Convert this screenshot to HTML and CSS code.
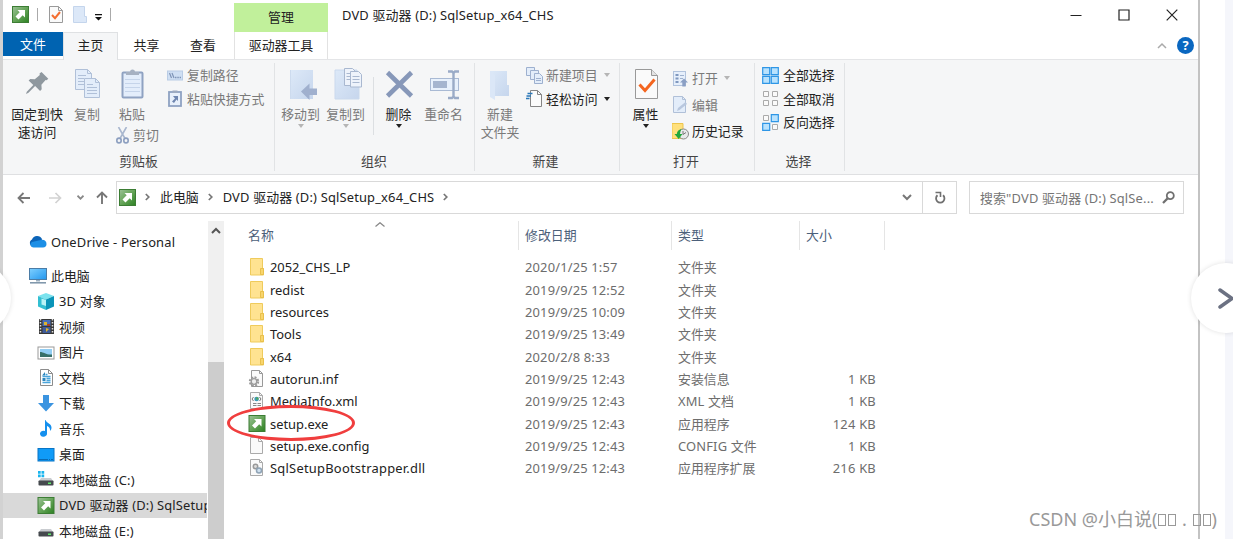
FILE: index.html
```html
<!DOCTYPE html>
<html lang="zh-CN">
<head>
  <meta charset="UTF-8">
  <meta name="viewport" content="width=device-width, initial-scale=1.0">
  <title>DVD 驱动器 (D:) SqlSetup_x64_CHS</title>
  <link rel="stylesheet" href="styles.css">
</head>
<body>
  <!-- Shared icons -->
  <svg class="defs" width="0" height="0">
    <defs>
      <linearGradient id="green" x1="0" y1="0" x2="1" y2="1">
        <stop offset="0" stop-color="#9cc297"/><stop offset=".5" stop-color="#65a458"/><stop offset="1" stop-color="#2c8122"/>
      </linearGradient>
      <linearGradient id="screen" x1="0" y1="0" x2="1" y2="1">
        <stop offset="0" stop-color="#7fd0ff"/><stop offset="1" stop-color="#2196ee"/>
      </linearGradient>
      <linearGradient id="pale" x1="0" y1="0" x2="1" y2="1">
        <stop offset="0" stop-color="#dde9f8"/><stop offset="1" stop-color="#c6d6ed"/>
      </linearGradient>
    </defs>
    <symbol id="i-setup" viewBox="0 0 17 17">
      <rect x=".5" y=".5" width="16" height="16" fill="url(#green)" stroke="#3c7d34"/>
      <path d="M5.500 4H13v7.500l-2.300-2.300-4.200 4.200-3-3 4.200-4.200z" fill="#fff"/>
    </symbol>
    <symbol id="i-folder" viewBox="0 0 14 18">
      <path d="M.5.500h12v10h1v6.500H.5z" fill="#ffe391" stroke="#efcb5c"/>
      <path d="M10.500 16.500v-6h3v6z" fill="#f8d56c" stroke="#e9c04c"/>
    </symbol>
    <symbol id="i-down" viewBox="0 0 6 4"><path d="M0 0h6L3 4z"/></symbol>
    <symbol id="i-drive" viewBox="0 0 17 16">
      <path d="M4 7h10l2 3H2z" fill="#c9ccd0"/><rect x="1.500" y="9.500" width="15" height="5" rx=".8" fill="#45494d"/>
      <rect x="11" y="11.500" width="3" height="1.500" fill="#5eea6a"/>
    </symbol>
  </svg>

  <div class="window">
    <!-- Title bar -->
    <div class="titlebar">
      <div class="quick-access">
        <svg width="17" height="17"><use href="#i-setup"/></svg>
        <span class="qa-line"></span>
        <svg class="qa-check" width="14" height="17" viewBox="0 0 14 17"><path d="M.5.5h9l4 4v12H.5z" fill="#fafafa" stroke="#9a9a9a"/><path d="M9.500.5v4h4" fill="none" stroke="#9a9a9a"/><path d="M3 9l3 3.200L11 6" fill="none" stroke="#f36d2f" stroke-width="2"/></svg>
        <svg class="qa-folder" width="14" height="17" viewBox="0 0 14 17"><path d="M.5.5h11v10h2v6H.5z" fill="#dce8f8" stroke="#c4d5ec"/></svg>
        <svg class="qa-more" width="7" height="7" viewBox="0 0 7 7"><path d="M0 0h7v1.300H0zM0 3h7L3.500 6.500z" fill="#111"/></svg>
        <span class="qa-line"></span>
      </div>
      <div class="context-tab">管理</div>
      <div class="window-title latin">DVD 驱动器 (D:) SqlSetup_x64_CHS</div>
      <div class="window-buttons">
        <svg width="12" height="12" viewBox="0 0 12 12"><path d="M.500 6.500h11" stroke="#222"/></svg>
        <svg width="12" height="12" viewBox="0 0 12 12"><path d="M1 1h10v10H1z" fill="none" stroke="#222" stroke-width="1.200"/></svg>
        <svg width="12" height="12" viewBox="0 0 12 12"><path d="M.7.700l10.600 10.600M11.300.7.700 11.300" stroke="#222" stroke-width="1.200"/></svg>
      </div>
    </div>

    <!-- Ribbon tabs -->
    <div class="tabs">
      <div class="tab tab-file">文件</div>
      <div class="tab tab-active">主页</div>
      <div class="tab tab-share">共享</div>
      <div class="tab tab-view">查看</div>
      <div class="tab tab-drive">驱动器工具</div>
      <div class="tabs-right">
        <svg width="10" height="7" viewBox="0 0 10 7"><path d="M1 6l4-4 4 4" fill="none" stroke="#aaa" stroke-width="1.500"/></svg>
        <span class="help">?</span>
      </div>
    </div>

    <!-- Ribbon -->
    <div class="ribbon">
      <div class="group group-clipboard">
        <div class="group-body">
          <div class="big-btn w-pin">
            <svg width="32" height="32" viewBox="0 0 32 32"><g transform="translate(5 4)"><path d="M15.500 0l6.800 6.800-1.700 1.500-1-.3-4.200 4.800.3 4.500-1.600 1.600-5-4.900-6.600 6.700L0 22l.8-2.200L7.300 13 2.600 8.500l1.700-1.600 4.500.3 5-4.300-.3-1.500z" fill="#8f989f"/></g></svg>
            <span>固定到快<br>速访问</span>
          </div>
          <div class="big-btn w-copy off">
            <svg width="32" height="32" viewBox="0 0 32 32"><g transform="translate(1 0)" fill="#e3edfa" stroke="#b0c0d8"><path d="M3.500 1.500h12l4 4v16h-16z"/><path d="M15.500 1.500v4h4M6 7.500h8M6 10.500h6M6 13.500h6M6 16.500h6" fill="none"/><path d="M12.500 10.500h11l4 4v15h-15z"/><path d="M23.500 10.500v4h4M15 16.500h6M15 19.500h10M15 22.500h10M15 25.500h10" fill="none"/></g></svg>
            <span>复制</span>
          </div>
          <div class="stack w-paste off">
            <div class="big-btn">
              <svg width="32" height="32" viewBox="0 0 32 32"><rect x="6.500" y="4.500" width="20" height="25" rx="1" fill="#e3edfb" stroke="#8fa2c2" stroke-width="2"/><path d="M9 11.500h15M9 15.500h15M9 19.500h15M9 23.500h15" stroke="#c5d4ea"/><path d="M10 7V4h4a2.500 2.500 0 0 1 5 0h4v3z" fill="#a6b1c2"/></svg>
              <span>粘贴</span>
            </div>
            <div class="small-btn cut">
              <svg width="13" height="17" viewBox="0 0 13 17"><path d="M2.500 0l6.500 11.500M10.500 0L4 11.500" stroke="#a9b7ce" stroke-width="1.600"/><ellipse cx="3" cy="13.500" rx="2.200" ry="2.400" fill="none" stroke="#8c9fc0" stroke-width="1.600"/><ellipse cx="10" cy="13.500" rx="2.200" ry="2.400" fill="none" stroke="#8c9fc0" stroke-width="1.600"/></svg>
              <span>剪切</span>
            </div>
          </div>
          <div class="small-list off">
            <div class="small-btn">
              <svg width="16" height="17" viewBox="0 0 16 17"><rect x=".5" y="4" width="15" height="9" fill="#cfdff3" stroke="#b9cce5"/><path d="M2.500 6l2 5M5 6l2 5" stroke="#7f94b7" stroke-width="1.200"/><path d="M8 10.500h6" stroke="#7f94b7" stroke-width="1.300" stroke-dasharray="1.500 .8"/></svg>
              <span>复制路径</span>
            </div>
            <div class="small-btn">
              <svg width="16" height="17" viewBox="0 0 16 17"><rect x="2" y="2" width="12" height="14" fill="#e8f0fb" stroke="#8fa2c2" stroke-width="1.800"/><path d="M5.500.5h5V3h-5z" fill="#9eabc0"/><path d="M6 6h5v5L9.500 9.500 7 13 5 11.500l3-3z" fill="#6f86b0"/></svg>
              <span>粘贴快捷方式</span>
            </div>
          </div>
        </div>
        <div class="group-name">剪贴板</div>
      </div>

      <div class="group group-organize">
        <div class="group-body">
          <div class="big-btn w45 off">
            <svg width="32" height="32" viewBox="0 0 32 32"><path d="M5 2h23v29H5z" fill="url(#pale)"/><path d="M5.500 2v29" stroke="#cddbee"/><path d="M16 23.500L24.500 15.500v5H32v6.500h-7.500v5z" fill="#a0b0ce"/></svg>
            <span>移动到</span>
            <svg class="drop" width="6" height="4"><use href="#i-down"/></svg>
          </div>
          <div class="big-btn w45 off">
            <svg width="32" height="32" viewBox="0 0 32 32"><path d="M5 2h22v16h2v13H5z" fill="url(#pale)" stroke="#cad9ed"/><g fill="#eef3fb" stroke="#a9b8d0"><path d="M14.500.5h8l3 3v14h-11z"/><path d="M16.500 5.500h5M16.500 8.500h5M16.500 11.500h5"/><path d="M20.500 3.500h8l3 3v12.500h-11z"/><path d="M22.500 8.500h7M22.500 11.500h7M22.500 14.500h7"/></g></svg>
            <span>复制到</span>
            <svg class="drop" width="6" height="4"><use href="#i-down"/></svg>
          </div>
          <div class="body-line"></div>
          <div class="big-btn w-delete">
            <svg width="32" height="32" viewBox="0 0 32 32"><path d="M4.500 4.500l24 23.500M28.500 4.500L4.500 28" stroke="#8798b9" stroke-width="4.600"/></svg>
            <span>删除</span>
            <svg class="drop" width="6" height="4"><use href="#i-down"/></svg>
          </div>
          <div class="big-btn w-rename off">
            <svg width="32" height="32" viewBox="0 0 32 32"><rect x="2.500" y="10.500" width="28" height="12" fill="#e8f1fc" stroke="#a9bad4"/><rect x="5" y="13" width="14" height="7" fill="#a5b5cf"/><path d="M20 3.500h4l1.500 1.500L27 3.500h4M20 30h4l1.500-1.500L27 30h4M25.500 4v25" fill="none" stroke="#9aabc7" stroke-width="2.400"/></svg>
            <span>重命名</span>
          </div>
        </div>
        <div class="group-name">组织</div>
      </div>

      <div class="group group-new">
        <div class="group-body">
          <div class="big-btn w-new off">
            <svg width="32" height="32" viewBox="0 0 32 32"><path d="M6 3h17v14h2v11H6z" fill="url(#pale)"/><path d="M6 3l5 4v25l-5-3z" fill="#dbe7f7"/></svg>
            <span>新建<br>文件夹</span>
          </div>
          <div class="small-list">
            <div class="small-btn off">
              <svg width="17" height="17" viewBox="0 0 17 17"><g fill="#e3edfa" stroke="#9db0cf"><path d="M.5.500h8v8h-8z"/><path d="M4.500 3.500h8v9h-8z"/><path d="M8.500 6.500h5l3 3v7h-8z"/><path d="M10 11.500h5M10 13.500h5"/></g></svg>
              <span>新建项目</span>
              <svg class="side-drop" width="6" height="4"><use href="#i-down"/></svg>
            </div>
            <div class="small-btn">
              <svg width="17" height="17" viewBox="0 0 17 17"><path d="M4.500.5h7l4 4v12h-11z" fill="#fbfbfb" stroke="#858585"/><path d="M11.500.5v4h4" fill="none" stroke="#858585"/><path d="M1.500 3.500h5M.500 6h4.500M0 8.500h3.500" stroke="#2b78b9" stroke-width="1.500"/></svg>
              <span>轻松访问</span>
              <svg class="side-drop" width="6" height="4"><use href="#i-down"/></svg>
            </div>
          </div>
        </div>
        <div class="group-name">新建</div>
      </div>

      <div class="group group-open">
        <div class="group-body">
          <div class="big-btn w-prop">
            <svg width="32" height="32" viewBox="0 0 32 32"><path d="M5.500 1.500h16l6 6v23h-22z" fill="#fafafa" stroke="#999"/><path d="M21.500 1.500v6h6" fill="#e3e3e3" stroke="#999"/><path d="M9.500 16.500l5.500 6 9.500-11" fill="none" stroke="#f4651f" stroke-width="3"/></svg>
            <span>属性</span>
            <svg class="drop" width="6" height="4"><use href="#i-down"/></svg>
          </div>
          <div class="small-list loose">
            <div class="small-btn off">
              <svg width="17" height="17" viewBox="0 0 17 17"><rect x="1.500" y="1.500" width="12" height="14" fill="#e6effb" stroke="#b1c3dd"/><path d="M3.500 4h3v2h-3zM3.500 7.500h3v2h-3zM3.500 11h3v2h-3z" fill="#7f98bf"/><path d="M8 5.500h4M8 8.500h3" stroke="#9fb2cf"/><path d="M12 8.500l4 4h-2.300v4h-3.400v-4H8z" fill="#8a9fc4"/></svg>
              <span>打开</span>
              <svg class="side-drop" width="6" height="4"><use href="#i-down"/></svg>
            </div>
            <div class="small-btn off">
              <svg width="17" height="17" viewBox="0 0 17 17"><path d="M1.500.5h9l3 3v13h-12z" fill="#e3edfa" stroke="#b0c0d8"/><path d="M10.500.5v3h3" fill="none" stroke="#b0c0d8"/><path d="M5 15l1-3 7.500-6 1.500 2-7.500 6z" fill="#b8c7de"/></svg>
              <span>编辑</span>
            </div>
            <div class="small-btn">
              <svg width="17" height="17" viewBox="0 0 17 17"><path d="M0 .500h11v15H0z" fill="#ffe07c" stroke="#edc54c"/><circle cx="11.500" cy="11" r="5" fill="#e7e9eb" stroke="#888"/><path d="M11 8v3.500l3-2" fill="none" stroke="#777"/><path d="M9.500 6c-3 .5-4.500 2.500-4.700 5H2.500l4.200 5 3.800-5H8c.1-1.800.6-3.500 1.500-5z" fill="#22a83c"/></svg>
              <span>历史记录</span>
            </div>
          </div>
        </div>
        <div class="group-name">打开</div>
      </div>

      <div class="group group-select">
        <div class="group-body">
          <div class="small-list">
            <div class="small-btn">
              <svg width="17" height="17" viewBox="0 0 17 17"><path d="M.7.700h7v7h-7zM9.300.7h7v7h-7zM.7 9.300h7v7h-7zM9.300 9.300h7v7h-7z" fill="#b9e2fd" stroke="#2e96e6" stroke-width="1.200"/></svg>
              <span>全部选择</span>
            </div>
            <div class="small-btn">
              <svg width="17" height="17" viewBox="0 0 17 17"><path d="M1.500 1.500h5v5h-5zM10.500 1.500h5v5h-5zM1.500 10.500h5v5h-5zM10.500 10.500h5v5h-5z" fill="#fafafa" stroke="#aaa"/></svg>
              <span>全部取消</span>
            </div>
            <div class="small-btn">
              <svg width="17" height="17" viewBox="0 0 17 17"><path d="M1.500 1.500h5v5h-5zM10.500 10.500h5v5h-5z" fill="#fafafa" stroke="#aaa"/><path d="M9.300.7h7v7h-7zM.7 9.300h7v7h-7z" fill="#b9e2fd" stroke="#2e96e6" stroke-width="1.200"/></svg>
              <span>反向选择</span>
            </div>
          </div>
        </div>
        <div class="group-name">选择</div>
      </div>
    </div>

    <!-- Address bar -->
    <div class="address-row">
      <div class="nav-buttons">
        <svg width="14" height="12" viewBox="0 0 14 12"><path d="M13 6H1.500M6.500 1L1.500 6l5 5" fill="none" stroke="#777" stroke-width="1.800"/></svg>
        <svg class="nav-forward" width="14" height="12" viewBox="0 0 14 12"><path d="M1 6h11.500M7.500 1l5 5-5 5" fill="none" stroke="#d2d2d2" stroke-width="1.700"/></svg>
        <svg class="nav-recent" width="7" height="5" viewBox="0 0 7 5"><path d="M.5.700l3 3 3-3" fill="none" stroke="#888" stroke-width="1.700"/></svg>
        <svg class="nav-up" width="12" height="14" viewBox="0 0 12 14"><path d="M6 13V1.500M1 6.500l5-5 5 5" fill="none" stroke="#777" stroke-width="1.900"/></svg>
      </div>
      <div class="address-box">
        <svg width="17" height="17"><use href="#i-setup"/></svg>
        <svg class="crumb-sep" width="5" height="8" viewBox="0 0 5 8"><path d="M.8 1l3 3-3 3" fill="none" stroke="#777" stroke-width="1.700"/></svg>
        <span>此电脑</span>
        <svg class="crumb-sep" width="5" height="8" viewBox="0 0 5 8"><path d="M.8 1l3 3-3 3" fill="none" stroke="#777" stroke-width="1.700"/></svg>
        <span class="latin">DVD 驱动器 (D:) SqlSetup_x64_CHS</span>
        <svg class="crumb-sep" width="5" height="8" viewBox="0 0 5 8"><path d="M.8 1l3 3-3 3" fill="none" stroke="#777" stroke-width="1.700"/></svg>
        <svg class="address-drop" width="10" height="7" viewBox="0 0 10 7"><path d="M1 1l4 4 4-4" fill="none" stroke="#777" stroke-width="2"/></svg>
        <div class="refresh">
          <svg width="12" height="13" viewBox="0 0 12 13"><path d="M3.500 4.200a4.200 4.200 0 1 0 5.500 0" fill="none" stroke="#707070" stroke-width="1.800"/><path d="M1.500 1.500h5v4.500" fill="none" stroke="#707070" stroke-width="1.600"/></svg>
        </div>
      </div>
      <div class="search-box">
        <span class="latin">搜索"DVD 驱动器 (D:) SqlSe...</span>
        <svg width="13" height="13" viewBox="0 0 13 13"><circle cx="8.300" cy="4.700" r="3.500" fill="none" stroke="#707070" stroke-width="1.800"/><path d="M5.600 7.400L1 12" stroke="#707070" stroke-width="2.200"/></svg>
      </div>
    </div>

    <div class="main">
      <!-- Navigation pane -->
      <div class="nav-pane">
        <div class="nav-item top onedrive">
          <svg width="18" height="16" viewBox="0 0 18 16"><path d="M4.500 13A4 4 0 0 1 3 5.500 5.500 5.500 0 0 1 13 5l-2 8z" fill="#0b64b8"/><path d="M5 13.500a3 3 0 0 1-3.500-3c0-1.500 1-2.500 2.500-2.800l8-1.700a4 4 0 0 1 5.500 4c0 2-1.200 3.500-3.500 3.500z" fill="#1c8fe6"/></svg>
          <span class="latin">OneDrive - Personal</span>
        </div>
        <div class="nav-item top">
          <svg width="18" height="16" viewBox="0 0 18 16"><rect x=".5" y=".5" width="17" height="11" fill="url(#screen)" stroke="#4b7ca6"/><path d="M7 12h4v1.500H7z" fill="#9db0c0"/><path d="M1 14.800h16" stroke="#7b93a8" stroke-width="1.500"/></svg>
          <span>此电脑</span>
        </div>
        <div class="nav-item">
          <svg width="18" height="17" viewBox="0 0 18 17"><path d="M9 0l8 3-8 3.500L1 3z" fill="#7be3ee"/><path d="M1 3l8 3.500V17l-8-3.500z" fill="#32bfd2"/><path d="M17 3L9 6.500V17l8-3.500z" fill="#0a94b8"/><path d="M4.500 5.500L9 7v6l-4.500-1.500z" fill="#b8f3f6"/></svg>
          <span class="latin">3D 对象</span>
        </div>
        <div class="nav-item">
          <svg width="18" height="17" viewBox="0 0 18 17"><rect x="2" y="1" width="15" height="15" fill="#383838"/><path d="M3.500 1v15M15.500 1v15" stroke="#ddd" stroke-width="1.500" stroke-dasharray="1.500 1.500"/><path d="M5.500 2h8v6h-8z" fill="#476eb8"/><path d="M5.500 9h8v6h-8z" fill="#3f5b99"/><path d="M7 4h3v3H7zM9 10l3 1-3 3z" fill="#ddb32e"/><path d="M10 6h3v2h-3z" fill="#a3412d"/></svg>
          <span>视频</span>
        </div>
        <div class="nav-item">
          <svg width="18" height="17" viewBox="0 0 18 17"><rect x="1" y="3" width="16" height="12" fill="#fff" stroke="#999"/><path d="M3 5h12v8H3z" fill="#92cdf3"/><path d="M3 8c4 0 6 3 12 2.500V13H3z" fill="#386f68"/></svg>
          <span>图片</span>
        </div>
        <div class="nav-item">
          <svg width="18" height="17" viewBox="0 0 18 17"><path d="M3.500.5h8l4 4v12h-12z" fill="#fff" stroke="#8c8c8c"/><path d="M11.500.5v4h4" fill="none" stroke="#8c8c8c"/><path d="M8.500 5.500h2M5.500 7.500h8M9.500 9.500h4M9.500 11.500h4M5.500 13.500h8" stroke="#4aa5dc" stroke-width="1.300"/><path d="M5.500 9h3v3h-3zM5 6.500L8 3v3.500z" fill="#2d86bd"/></svg>
          <span>文档</span>
        </div>
        <div class="nav-item">
          <svg width="18" height="17" viewBox="0 0 18 17"><path d="M6 0h6v8h5l-8 8.500L1 8h5z" fill="#3b94e0"/></svg>
          <span>下载</span>
        </div>
        <div class="nav-item">
          <svg width="18" height="17" viewBox="0 0 18 17"><path d="M8.500 0c1 3 6 3.500 6 7.500 0 1.500-.5 2.500-1.500 3.500.5-3-1.500-4.500-3-5v7.500a3.500 3 0 1 1-2-2.500V0z" fill="#1590ee"/></svg>
          <span>音乐</span>
        </div>
        <div class="nav-item">
          <svg width="18" height="17" viewBox="0 0 18 17"><rect x="1" y="2.500" width="16" height="12.500" fill="#109bf7" stroke="#0875c6"/><path d="M2 13.500h14" stroke="#096bb4" stroke-dasharray="9 1 1 1"/></svg>
          <span>桌面</span>
        </div>
        <div class="nav-item">
          <svg width="18" height="17" viewBox="0 0 18 17"><use href="#i-drive" width="17" height="16"/><path d="M1 0h2.700v2.700H1zM4.500 0h2.700v2.700H4.500zM1 3.500h2.700v2.700H1zM4.500 3.500h2.700v2.700H4.500z" fill="#19b5ee"/></svg>
          <span class="latin">本地磁盘 (C:)</span>
        </div>
        <div class="nav-item selected">
          <svg width="18" height="17"><use href="#i-setup"/></svg>
          <span class="latin">DVD 驱动器 (D:) SqlSetup_x64_CHS</span>
        </div>
        <div class="nav-item">
          <svg width="18" height="17" viewBox="0 0 18 17"><use href="#i-drive" width="17" height="16"/></svg>
          <span class="latin">本地磁盘 (E:)</span>
        </div>
      </div>
      <div class="scrollbar">
        <svg width="10" height="7" viewBox="0 0 10 7"><path d="M1 6l4-4 4 4" fill="none" stroke="#555" stroke-width="2"/></svg>
        <div class="thumb"></div>
      </div>

      <!-- File list -->
      <div class="files">
        <div class="file-row file-head">
          <div class="col-name">名称<svg class="sort" width="10" height="5" viewBox="0 0 10 5"><path d="M.500 4.500L5 .7l4.500 3.800" fill="none" stroke="#888" stroke-width="1.200"/></svg></div>
          <div>修改日期</div>
          <div>类型</div>
          <div>大小</div>
        </div>
        <div class="file-row">
          <div class="file-name"><svg width="18" height="18"><use href="#i-folder"/></svg>2052_CHS_LP</div>
          <div class="date">2020/1/25 1:57</div><div>文件夹</div><div></div>
        </div>
        <div class="file-row">
          <div class="file-name"><svg width="18" height="18"><use href="#i-folder"/></svg>redist</div>
          <div class="date">2019/9/25 12:52</div><div>文件夹</div><div></div>
        </div>
        <div class="file-row">
          <div class="file-name"><svg width="18" height="18"><use href="#i-folder"/></svg>resources</div>
          <div class="date">2019/9/25 10:09</div><div>文件夹</div><div></div>
        </div>
        <div class="file-row">
          <div class="file-name"><svg width="18" height="18"><use href="#i-folder"/></svg>Tools</div>
          <div class="date">2019/9/25 13:49</div><div>文件夹</div><div></div>
        </div>
        <div class="file-row">
          <div class="file-name"><svg width="18" height="18"><use href="#i-folder"/></svg>x64</div>
          <div class="date">2020/2/8 8:33</div><div>文件夹</div><div></div>
        </div>
        <div class="file-row">
          <div class="file-name"><svg width="18" height="18" viewBox="0 0 18 18"><path d="M3.500.5h8l3 3v13h-11z" fill="#fafafa" stroke="#999"/><path d="M11.500.5v3h3" fill="none" stroke="#999"/><circle cx="6" cy="11.500" r="4.200" fill="none" stroke="#999" stroke-width="2" stroke-dasharray="2 1.300"/><circle cx="6" cy="11.500" r="2.800" fill="#eee" stroke="#999" stroke-width="1.300"/></svg>autorun.inf</div>
          <div class="date">2019/9/25 12:43</div><div>安装信息</div><div>1 KB</div>
        </div>
        <div class="file-row">
          <div class="file-name"><svg width="18" height="18" viewBox="0 0 18 18"><path d="M2.500.5h9l3 3v13h-12z" fill="#fafafa" stroke="#aaa"/><path d="M11.500.5v3h3" fill="none" stroke="#aaa"/><circle cx="8.600" cy="7" r="2.300" fill="#3a9ab5"/><path d="M8.300 5.500h2v2h-2z" fill="#59a84b"/><path d="M5.500 5L4 7l1.500 2M11.500 5L13 7l-1.500 2" fill="none" stroke="#777"/><path d="M5 11.500h8M5 13.500h8" stroke="#888" stroke-dasharray="3.500 1"/></svg>MediaInfo.xml</div>
          <div class="date">2019/9/25 12:43</div><div class="date">XML 文档</div><div>1 KB</div>
        </div>
        <div class="file-row">
          <div class="file-name"><svg width="18" height="17"><use href="#i-setup"/></svg>setup.exe</div>
          <div class="date">2019/9/25 12:43</div><div>应用程序</div><div>124 KB</div>
        </div>
        <div class="file-row">
          <div class="file-name"><svg width="18" height="18" viewBox="0 0 18 18"><path d="M2.500.5h8l4 4v12h-12z" fill="#fafafa" stroke="#aaa"/><path d="M10.500.5v4h4" fill="none" stroke="#aaa"/></svg>setup.exe.config</div>
          <div class="date">2019/9/25 12:43</div><div class="date">CONFIG 文件</div><div>1 KB</div>
        </div>
        <div class="file-row">
          <div class="file-name"><svg width="18" height="18" viewBox="0 0 18 18"><path d="M2.500.5h9l3 3v13h-12z" fill="#fafafa" stroke="#aaa"/><path d="M11.500.5v3h3" fill="none" stroke="#aaa"/><circle cx="7.500" cy="7.500" r="2.200" fill="#ddd" stroke="#999" stroke-width="1.500"/><circle cx="11" cy="11.500" r="2.500" fill="#cfe0ee" stroke="#8fa3b5" stroke-width="1.500"/></svg><span class="wide">SqlSetupBootstrapper.dll</span></div>
          <div class="date">2019/9/25 12:43</div><div>应用程序扩展</div><div>216 KB</div>
        </div>
        <div class="marker"></div>
      </div>
    </div>
  </div>

  <!-- Page edge and carousel buttons -->
  <div class="page-edge"></div>
  <div class="slide-btn slide-prev"></div>
  <div class="slide-btn slide-next">
    <svg width="18" height="22" viewBox="0 0 18 22"><path d="M3 3l12 8.500L3 20" fill="none" stroke="#6b7182" stroke-width="3.500" stroke-linecap="round" stroke-linejoin="round"/></svg>
  </div>
  <div class="watermark">CSDN @小白说(<span class="box"></span><span class="box"></span> . <span class="box"></span><span class="box"></span>)</div>
</body>
</html>
```

FILE: styles.css
```css
* {
  box-sizing: border-box;
}
body {
  margin: 0;
  height: 539px;
  overflow: hidden;
  position: relative;
  display: flex;
  background: #fff;
  font-family: "Noto Sans", "Noto Sans CJK SC", sans-serif;
  font-size: 12.9px;
  line-height: 18px;
  color: #222;
  white-space: nowrap;
}
svg {
  display: block;
  flex: none;
}
.defs {
  position: absolute;
}
.latin {
  letter-spacing: 0.17px;
}
.window {
  width: 1200px;
  height: 539px;
  flex: none;
  overflow: hidden;
  border-left: 3px solid #d2d2d2;
  border-right: 2px solid #c3c3c3;
}

/* Title bar */
.titlebar {
  height: 32px;
  display: flex;
}
.quick-access {
  width: 231px;
  height: 29px;
  padding-left: 9px;
  display: flex;
  align-items: center;
}
.qa-line {
  width: 1px;
  height: 13px;
  margin-left: 8px;
  background: #aaa;
}
.qa-check {
  margin-left: 11px;
}
.qa-folder {
  margin: 0 8px 0 10px;
}
.qa-more {
  margin-top: 5px;
}
.context-tab {
  width: 94px;
  margin-top: 3px;
  line-height: 29px;
  text-align: center;
  background: #c1f09b;
}
.window-title {
  margin-left: 14px;
  line-height: 31px;
}
.window-buttons {
  margin-left: auto;
  display: flex;
  gap: 36px;
  padding: 9px 20px 0 0;
}

/* Tabs */
.tabs {
  height: 27px;
  display: flex;
}
.tab {
  height: 27px;
  line-height: 26px;
  text-align: center;
}
.tab-file {
  width: 60px;
  height: 24px;
  line-height: 25px;
  background: #0063b1;
  color: #fff;
}
.tab-active {
  width: 55px;
  height: 28px;
  line-height: 24px;
  position: relative;
  background: #f5f6f7;
  border: 1px solid #dfe1e3;
  border-bottom: none;
}
.tab-share {
  width: 57px;
}
.tab-view {
  width: 56px;
}
.tab-drive {
  width: 94px;
  margin-left: 3px;
  border-left: 1px solid #e2e2e2;
  border-right: 1px solid #e2e2e2;
}
.tabs-right {
  margin-left: auto;
  display: flex;
  align-items: center;
  gap: 10px;
  padding-right: 4px;
}
.help {
  width: 17px;
  height: 17px;
  line-height: 17px;
  border-radius: 50%;
  background: #0a67c0;
  color: #fff;
  font-weight: bold;
  text-align: center;
}

/* Ribbon */
.ribbon {
  height: 116px;
  display: flex;
  background: #f5f6f7;
  border-top: 1px solid #e4e5e7;
  border-bottom: 1px solid #dfe0e2;
}
.group {
  height: 108px;
  margin-top: 3px;
  border-right: 1px solid #e1e3e5;
}
.group-clipboard { width: 272px; }
.group-organize { width: 200px; padding-left: 3px; }
.group-new { width: 145px; }
.group-open { width: 135px; }
.group-select { width: 90px; }
.group-body {
  height: 89px;
  display: flex;
}
.group-name {
  text-align: center;
  color: #444;
}
.group-organize .group-name {
  padding-right: 4px;
}
.group-new .group-name {
  padding-right: 3px;
}
.group-open .group-name,
.group-select .group-name {
  padding-right: 2px;
}
.big-btn {
  padding-top: 5px;
  display: flex;
  flex-direction: column;
  align-items: center;
  text-align: center;
}
.big-btn span {
  margin-top: 5px;
}
.off {
  color: #7a7a7a;
}
.drop,
.side-drop {
  fill: #222;
}
.off .drop,
.off .side-drop {
  fill: #b5b5b5;
}
.drop {
  margin-top: 1px;
}
.side-drop {
  margin-left: 3px;
}
.w45 { width: 45px; }
.w-pin { width: 68px; }
.w-copy { width: 32px; margin-right: 13px; }
.w-paste { width: 46px; }
.w-delete { width: 49px; }
.w-rename { width: 41px; }
.w-new { width: 50px; }
.w-prop { width: 51px; }
.w-paste .big-btn {
  width: 32px;
}
.cut {
  margin-top: 3px;
}
.small-btn {
  display: flex;
  align-items: center;
  gap: 4px;
}
.small-list {
  padding-top: 3px;
  display: flex;
  flex-direction: column;
  gap: 5.500px;
}
.group-clipboard .small-list {
  padding-left: 5px;
}
.group-select .small-list {
  padding-left: 7px;
}
.group-new .small-list {
  padding-left: 1px;
}
.group-new .small-btn,
.group-open .small-btn {
  gap: 3px;
}
.small-list.loose {
  padding: 6px 0 0 1px;
  gap: 8.500px;
}
.body-line {
  width: 1px;
  height: 58px;
  margin-top: 14px;
  margin-left: 5px;
  background: #dcdfe2;
}

/* Address bar */
.address-row {
  height: 46px;
  padding-top: 6px;
  display: flex;
}
.nav-buttons {
  width: 113px;
  height: 33px;
  padding-left: 14px;
  display: flex;
  align-items: center;
}
.nav-forward { margin-left: 17px; }
.nav-recent { margin-left: 15px; }
.nav-up { margin-left: 12px; }
.address-box {
  width: 841px;
  height: 33px;
  padding: 0 0 1px 2px;
  border: 1px solid #d9d9d9;
  display: flex;
  align-items: center;
}
.address-box .crumb-sep {
  margin: 0 10px 0 9px;
}
.address-drop {
  margin-left: auto;
}
.refresh {
  width: 34px;
  height: 31px;
  margin-left: 10px;
  margin-bottom: -1px;
  border-left: 1px solid #d9d9d9;
  display: flex;
  align-items: center;
  justify-content: center;
}
.search-box {
  width: 215px;
  height: 33px;
  margin-left: 12px;
  padding: 0 8px 0 10px;
  border: 1px solid #d9d9d9;
  display: flex;
  align-items: center;
  justify-content: space-between;
  color: #757575;
}

/* Navigation pane */
.main {
  height: 318px;
  display: flex;
}
.nav-pane {
  width: 205px;
  padding-top: 8px;
  overflow: hidden;
}
.nav-item {
  height: 25.500px;
  padding-left: 34px;
  display: flex;
  align-items: center;
  gap: 4px;
}
.nav-item.top {
  padding-left: 26px;
}
.nav-item.onedrive {
  margin-bottom: 8.500px;
}
.nav-item.selected {
  width: 204px;
  overflow: hidden;
  background: #d9d9d9;
}
.scrollbar {
  width: 16px;
  background: #f0f0f0;
  display: flex;
  flex-direction: column;
  align-items: center;
  padding-top: 6px;
}
.thumb {
  width: 16px;
  height: 180px;
  margin-top: 128px;
  background: #cdcdcd;
}

/* File list */
.files {
  position: relative;
  padding-left: 24px;
}
.file-row {
  height: 22.350px;
  display: grid;
  grid-template-columns: 277px 153px 128px 70px;
  align-items: center;
  color: #6d6d6d;
}
.file-row > div:last-child {
  text-align: right;
  letter-spacing: 0.25px;
}
.date {
  letter-spacing: 0.17px;
}
.wide {
  letter-spacing: 0.25px;
}
.file-name {
  display: flex;
  align-items: center;
  gap: 4px;
  color: #222;
}
.file-head {
  height: 29px;
  margin-bottom: 6px;
  grid-template-columns: 271px 153px 128px 85px;
  color: #4c607a;
}
.file-row.file-head > div {
  height: 29px;
  line-height: 29px;
  padding-left: 6px;
  border-right: 1px solid #e5e5e5;
  text-align: left;
  letter-spacing: 0;
}
.file-row.file-head .col-name {
  padding-left: 0;
  display: flex;
}
.sort {
  margin-left: 101px;
  margin-top: 1px;
}
/* hand-drawn ring round setup.exe */
.marker {
  position: absolute;
  left: 3px;
  top: 184px;
  width: 128px;
  height: 36px;
  border: 3px solid #f03e3e;
  border-radius: 50%;
}

/* Page edge, carousel buttons, watermark */
.page-edge {
  width: 8px;
  height: 539px;
  margin-left: 25px;
  background: #f5f6fb;
}
.slide-btn {
  position: absolute;
  top: 263px;
  width: 70px;
  height: 70px;
  border-radius: 50%;
  background: #fff;
  box-shadow: 0 0 5px rgba(0, 0, 0, 0.12);
}
.slide-prev {
  left: -59px;
}
.slide-next {
  left: 1191px;
  padding: 24px 0 0 26px;
}
.watermark {
  position: absolute;
  left: 1029px;
  top: 507px;
  font-size: 18px;
  line-height: 24px;
  color: #999;
}
.box {
  display: inline-block;
  width: 8px;
  height: 12px;
  margin: 0 1px;
  border: 1px solid #999;
}
```
